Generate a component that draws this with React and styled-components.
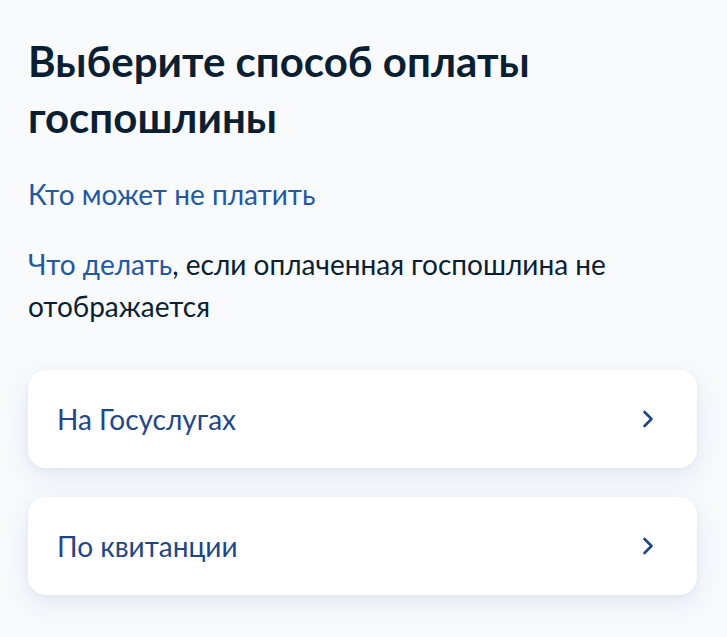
import React from "react";
import styled, { createGlobalStyle } from "styled-components";

const Global = createGlobalStyle`
  html, body {
    margin: 0;
    padding: 0;
    background: #f8fafc;
  }
  body {
    font-family: Lato, "Noto Sans", sans-serif;
    -webkit-font-smoothing: antialiased;
  }
`;

const Page = styled.main`
  min-height: 637px;
  box-sizing: border-box;
  padding: 33px 30px 40px 28px;
  display: flex;
  flex-direction: column;
`;

const Title = styled.h1`
  margin: 0;
  font-size: 42px;
  line-height: 56px;
  font-weight: 700;
  color: #0b1f33;
`;

const Link = styled.a`
  color: #23599f;
  text-decoration: none;
  cursor: pointer;
`;

const LinkLine = styled.p`
  margin: 28px 0 0;
  font-size: 28px;
  line-height: 42px;
`;

const Note = styled.p`
  margin: 28px 0 0;
  font-size: 28px;
  line-height: 42px;
  color: #0b1f33;
`;

const Options = styled.div`
  margin-top: 43px;
  display: flex;
  flex-direction: column;
  gap: 29px;
`;

const Option = styled.button`
  all: unset;
  box-sizing: border-box;
  height: 98px;
  display: flex;
  align-items: center;
  justify-content: space-between;
  padding: 0 42px 0 29px;
  background: #ffffff;
  border-radius: 18px;
  box-shadow: 0 8px 24px rgba(110, 140, 190, 0.16), 0 1px 4px rgba(110, 140, 190, 0.08);
  cursor: pointer;
`;

const OptionLabel = styled.span`
  font-family: Lato, "Noto Sans", sans-serif;
  font-size: 28px;
  color: #1f4784;
`;

const Chevron = () => (
  <svg width="14" height="20" viewBox="0 0 14 20" fill="none">
    <path d="M3.5 3 L10.5 10 L3.5 17" stroke="#1f4784" strokeWidth="2.6" strokeLinecap="round" strokeLinejoin="round" />
  </svg>
);

const methods = ["На Госуслугах", "По квитанции"];

export default function App() {
  return (
    <>
      <Global />
      <Page>
        <Title>Выберите способ оплаты госпошлины</Title>
        <LinkLine>
          <Link>Кто может не платить</Link>
        </LinkLine>
        <Note>
          <Link>Что делать</Link>, если оплаченная госпошлина не отображается
        </Note>
        <Options>
          {methods.map((m) => (
            <Option key={m}>
              <OptionLabel>{m}</OptionLabel>
              <Chevron />
            </Option>
          ))}
        </Options>
      </Page>
    </>
  );
}
